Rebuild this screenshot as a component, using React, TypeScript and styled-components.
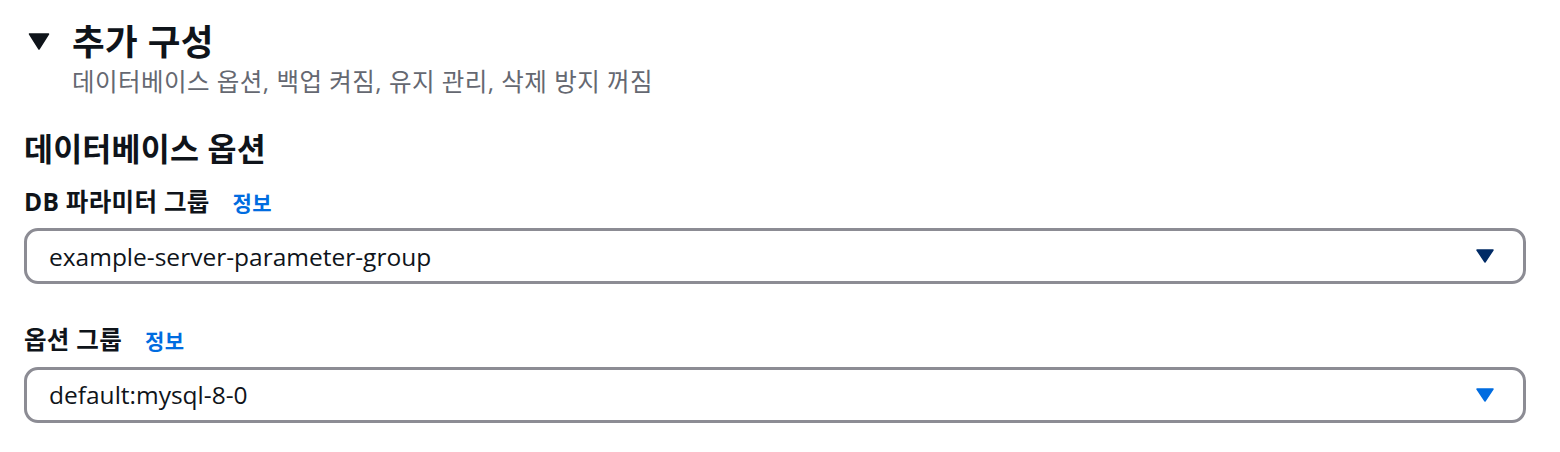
import React from "react";
import styled, { createGlobalStyle } from "styled-components";

const Global = createGlobalStyle`
  html, body { margin: 0; padding: 0; background: #ffffff; }
  body {
    font-family: "Open Sans", "Noto Sans CJK KR", sans-serif;
    color: #0f141a;
  }
`;

const Page = styled.div`
  width: 1560px;
  height: 452px;
  box-sizing: border-box;
  padding: 19px 34px 0 24px;
  display: flex;
  flex-direction: column;
`;

const Header = styled.div`
  display: flex;
  align-items: flex-start;
  gap: 22px;
`;

const Caret = styled.svg`
  flex: none;
  width: 22px;
  height: 22px;
  margin-top: 11px;
  margin-left: 4px;
`;

const HeaderText = styled.div`
  display: flex;
  flex-direction: column;
`;

const Title = styled.h2`
  margin: 0;
  font-size: 35.5px;
  line-height: 45px;
  font-weight: 700;
  letter-spacing: 0.4px;
  color: #0f141a;
`;

const Subtitle = styled.div`
  font-size: 24.5px;
  line-height: 35px;
  letter-spacing: 0.46px;
  color: #656871;
`;

const SectionTitle = styled.h3`
  margin: 31px 0 0;
  font-size: 31.5px;
  line-height: 38.5px;
  font-weight: 700;
  letter-spacing: 0.2px;
  color: #0f141a;
`;

const Field = styled.div<{ $first?: boolean }>`
  display: flex;
  flex-direction: column;
  margin-top: ${(p) => (p.$first ? "14px" : "37px")};
`;

const LabelRow = styled.div`
  display: flex;
  align-items: baseline;
  gap: 23px;
  margin-bottom: 7px;
`;

const Label = styled.label`
  font-size: 24.5px;
  line-height: 38.5px;
  font-weight: 700;
  letter-spacing: 0.3px;
  color: #0f141a;
`;

const InfoLink = styled.a`
  font-size: 21px;
  font-weight: 700;
  letter-spacing: 0.4px;
  color: #006ce0;
  text-decoration: none;
`;

const SelectBox = styled.div`
  height: 56px;
  box-sizing: border-box;
  border: 3px solid #8c8c94;
  border-radius: 14px;
  display: flex;
  align-items: center;
  justify-content: space-between;
  padding: 0 29px 0 22px;
`;

const SelectValue = styled.span`
  font-size: 24.5px;
  color: #0f141a;
`;

const Arrow = ({ color }: { color: string }) => (
  <svg width="18" height="14" viewBox="0 0 18 14">
    <path d="M1 1h16L9 13z" fill={color} stroke={color} strokeWidth="1.5" strokeLinejoin="round" />
  </svg>
);

export default function App() {
  return (
    <>
      <Global />
      <Page>
        <Header>
          <Caret viewBox="0 0 22 22">
            <path d="M1.5 4h19L11 19z" fill="#0f141a" stroke="#0f141a" strokeWidth="1.5" strokeLinejoin="round" />
          </Caret>
          <HeaderText>
            <Title>추가 구성</Title>
            <Subtitle>데이터베이스 옵션, 백업 켜짐, 유지 관리, 삭제 방지 꺼짐</Subtitle>
          </HeaderText>
        </Header>
        <SectionTitle>데이터베이스 옵션</SectionTitle>
        <Field $first>
          <LabelRow>
            <Label>DB 파라미터 그룹</Label>
            <InfoLink href="#">정보</InfoLink>
          </LabelRow>
          <SelectBox>
            <SelectValue>example-server-parameter-group</SelectValue>
            <Arrow color="#002b66" />
          </SelectBox>
        </Field>
        <Field>
          <LabelRow>
            <Label>옵션 그룹</Label>
            <InfoLink href="#">정보</InfoLink>
          </LabelRow>
          <SelectBox>
            <SelectValue>default:mysql-8-0</SelectValue>
            <Arrow color="#006ce0" />
          </SelectBox>
        </Field>
      </Page>
    </>
  );
}
